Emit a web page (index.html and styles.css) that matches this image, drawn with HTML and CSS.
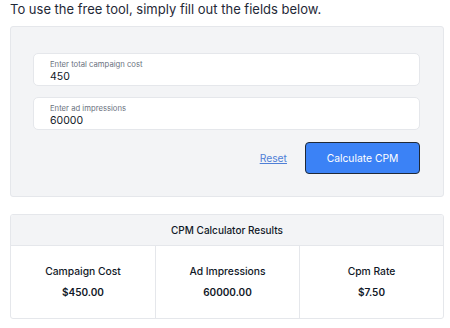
FILE: index.html
```html
<!DOCTYPE html>
<html>
<head>
<meta charset="utf-8">
<link rel="stylesheet" href="styles.css">
</head>
<body>
<div class="page">
  <p class="intro">To use the free tool, simply fill out the fields below.</p>
  <div class="form-box">
    <div class="field">
      <span class="field-label">Enter total campaign cost</span>
      <span class="field-value">450</span>
    </div>
    <div class="field">
      <span class="field-label">Enter ad impressions</span>
      <span class="field-value">60000</span>
    </div>
    <div class="actions">
      <a class="reset" href="#">Reset</a>
      <button class="calc">Calculate CPM</button>
    </div>
  </div>
  <div class="results">
    <div class="results-head">CPM Calculator Results</div>
    <div class="results-grid">
      <div class="cell"><div class="cell-label">Campaign Cost</div><div class="cell-value">$450.00</div></div>
      <div class="cell"><div class="cell-label">Ad Impressions</div><div class="cell-value">60000.00</div></div>
      <div class="cell"><div class="cell-label">Cpm Rate</div><div class="cell-value">$7.50</div></div>
    </div>
  </div>
</div>
</body>
</html>
```
FILE: styles.css
```css
* { box-sizing: border-box; }
html, body { margin: 0; padding: 0; background: #fff; }
body { font-family: Inter, "Noto Sans", sans-serif; color: #111827; }
.page { width: 434px; margin-left: 10px; }
.intro { margin: 0; font-size: 13px; line-height: 18px; height: 26px; color: #1f2937; }
.form-box {
  background: #f3f4f6;
  border: 1px solid #e5e7eb;
  border-radius: 3px;
  padding: 26px 23px 22px 22px;
  display: flex;
  flex-direction: column;
  gap: 11px;
}
.field {
  background: #fff;
  border: 1px solid #e5e7eb;
  border-radius: 5px;
  height: 33px;
  padding: 5px 16px 0;
  display: flex;
  flex-direction: column;
}
.field-label { font-size: 7.7px; line-height: 11px; color: #6b7280; }
.field-value { font-size: 10.5px; line-height: 14px; color: #111827; }
.actions {
  display: flex;
  justify-content: flex-end;
  align-items: center;
  gap: 18px;
  margin-top: 1px;
}
.reset { font-size: 10.3px; color: #4f7fd6; text-decoration: underline; }
.calc {
  width: 115px;
  height: 32px;
  background: #3b82f6;
  color: #fff;
  border: 1px solid #1f2937;
  border-radius: 4px;
  font-family: inherit;
  font-size: 10.3px;
  padding: 0;
}
.results {
  margin-top: 17px;
  border: 1px solid #e5e7eb;
  border-radius: 3px;
  overflow: hidden;
}
.results-head {
  background: #f3f4f6;
  border-bottom: 1px solid #e5e7eb;
  height: 31px;
  display: flex;
  align-items: center;
  justify-content: center;
  font-size: 10px;
  font-weight: 500;
}
.results-grid { display: grid; grid-template-columns: 1fr 1fr 1fr; height: 72px; }
.cell {
  border-left: 1px solid #e5e7eb;
  display: flex;
  flex-direction: column;
  align-items: center;
  padding-top: 19px;
  gap: 8px;
}
.cell:first-child { border-left: none; }
.cell-label { font-size: 10.3px; line-height: 13px; font-weight: 500; }
.cell-value { font-size: 10px; line-height: 13px; font-weight: 600; }
```
